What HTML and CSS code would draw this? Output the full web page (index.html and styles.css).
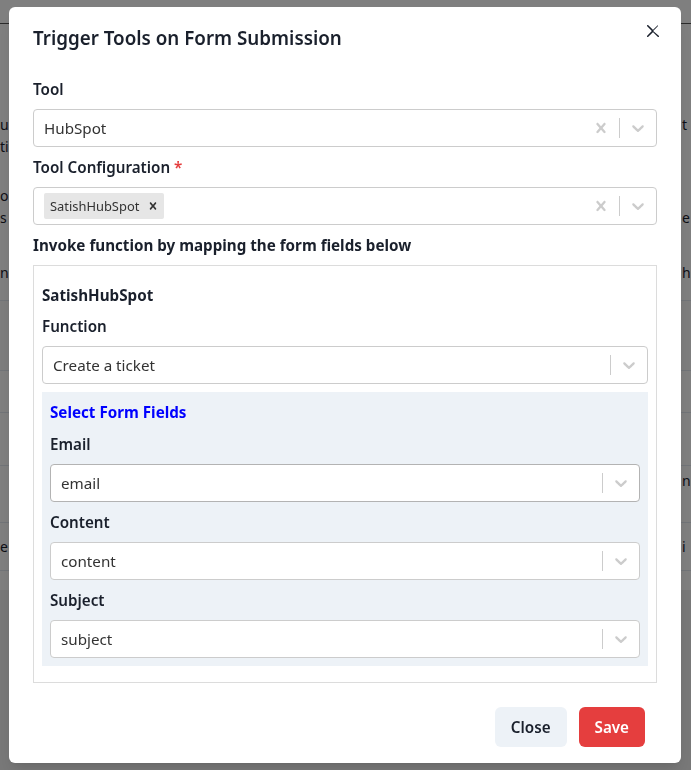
FILE: index.html
```html
<!DOCTYPE html>
<html lang="en">
<head>
<meta charset="utf-8">
<title>Trigger Tools on Form Submission</title>
<link rel="stylesheet" href="styles.css">
</head>
<body>
<div class="page">
  <div class="page-top"></div>
  <div class="page-intro">
    <div class="intro-line"><span>u</span><span></span><span>t</span></div>
    <div class="intro-line"><span>ti</span><span></span><span></span></div>
    <div class="intro-line gap-a"><span>o</span><span></span><span></span></div>
    <div class="intro-line"><span>s</span><span></span><span>e</span></div>
    <div class="intro-line gap-b"><span>n</span><span></span><span>h</span></div>
  </div>
  <div class="page-row r1"></div>
  <div class="page-row r2"></div>
  <div class="page-row r3"></div>
  <div class="page-row r4"><span></span><span></span><span>n</span></div>
  <div class="page-row r5"><span>e</span><span></span><span>i</span></div>
  <div class="page-row r6"></div>
</div>

<div class="overlay"></div>

<div class="modal-layer">
  <section class="modal">
    <header class="modal-header">
      <h2 class="modal-title">Trigger Tools on Form Submission</h2>
      <button class="modal-close" aria-label="Close">
        <svg viewBox="0 0 24 24" width="12" height="12"><path fill="currentColor" d="M.439,21.44a1.5,1.5,0,0,0,2.122,2.121L11.823,14.3a.25.25,0,0,1,.354,0l9.262,9.263a1.5,1.5,0,1,0,2.122-2.121L12.3,12.177a.25.25,0,0,1,0-.354l9.263-9.262A1.5,1.5,0,0,0,21.439.44L12.177,9.7a.25.25,0,0,1-.354,0L2.561.44A1.5,1.5,0,0,0,.439,2.561L9.7,11.823a.25.25,0,0,1,0,.354Z"/></svg>
      </button>
    </header>

    <div class="modal-body">
      <div class="field first">
        <label class="label">Tool</label>
        <div class="select">
          <div class="value"><span class="single">HubSpot</span></div>
          <div class="indicators">
            <span class="ind"><svg viewBox="0 0 20 20" width="20" height="20"><path fill="currentColor" d="M14.348 14.849c-0.469 0.469-1.229 0.469-1.697 0l-2.651-3.030-2.651 3.029c-0.469 0.469-1.229 0.469-1.697 0-0.469-0.469-0.469-1.229 0-1.697l2.758-3.150-2.759-3.152c-0.469-0.469-0.469-1.228 0-1.697s1.228-0.469 1.697 0l2.652 3.031 2.651-3.031c0.469-0.469 1.228-0.469 1.697 0s0.469 1.229 0 1.697l-2.758 3.152 2.758 3.150c0.469 0.469 0.469 1.229 0 1.698z"/></svg></span>
            <span class="sep"></span>
            <span class="ind"><svg viewBox="0 0 20 20" width="20" height="20"><path fill="currentColor" d="M4.516 7.548c0.436-0.446 1.043-0.481 1.576 0l3.908 3.747 3.908-3.747c0.533-0.481 1.141-0.446 1.574 0 0.436 0.445 0.408 1.197 0 1.615-0.406 0.418-4.695 4.502-4.695 4.502-0.217 0.223-0.502 0.335-0.787 0.335s-0.57-0.112-0.789-0.335c0 0-4.287-4.084-4.695-4.502s-0.436-1.170 0-1.615z"/></svg></span>
          </div>
        </div>
      </div>

      <div class="field">
        <label class="label">Tool Configuration <span class="req">*</span></label>
        <div class="select">
          <div class="value">
            <span class="chip">
              <span class="chip-label">SatishHubSpot</span>
              <span class="chip-remove"><svg viewBox="0 0 20 20" width="14" height="14"><path fill="currentColor" d="M14.348 14.849c-0.469 0.469-1.229 0.469-1.697 0l-2.651-3.030-2.651 3.029c-0.469 0.469-1.229 0.469-1.697 0-0.469-0.469-0.469-1.229 0-1.697l2.758-3.150-2.759-3.152c-0.469-0.469-0.469-1.228 0-1.697s1.228-0.469 1.697 0l2.652 3.031 2.651-3.031c0.469-0.469 1.228-0.469 1.697 0s0.469 1.229 0 1.697l-2.758 3.152 2.758 3.150c0.469 0.469 0.469 1.229 0 1.698z"/></svg></span>
            </span>
          </div>
          <div class="indicators">
            <span class="ind"><svg viewBox="0 0 20 20" width="20" height="20"><path fill="currentColor" d="M14.348 14.849c-0.469 0.469-1.229 0.469-1.697 0l-2.651-3.030-2.651 3.029c-0.469 0.469-1.229 0.469-1.697 0-0.469-0.469-0.469-1.229 0-1.697l2.758-3.150-2.759-3.152c-0.469-0.469-0.469-1.228 0-1.697s1.228-0.469 1.697 0l2.652 3.031 2.651-3.031c0.469-0.469 1.228-0.469 1.697 0s0.469 1.229 0 1.697l-2.758 3.152 2.758 3.150c0.469 0.469 0.469 1.229 0 1.698z"/></svg></span>
            <span class="sep"></span>
            <span class="ind"><svg viewBox="0 0 20 20" width="20" height="20"><path fill="currentColor" d="M4.516 7.548c0.436-0.446 1.043-0.481 1.576 0l3.908 3.747 3.908-3.747c0.533-0.481 1.141-0.446 1.574 0 0.436 0.445 0.408 1.197 0 1.615-0.406 0.418-4.695 4.502-4.695 4.502-0.217 0.223-0.502 0.335-0.787 0.335s-0.57-0.112-0.789-0.335c0 0-4.287-4.084-4.695-4.502s-0.436-1.170 0-1.615z"/></svg></span>
          </div>
        </div>
      </div>

      <div class="field">
        <p class="section-label">Invoke function by mapping the form fields below</p>
        <div class="mapping">
          <p class="tool-name">SatishHubSpot</p>
          <div class="field">
            <label class="label">Function</label>
            <div class="select">
              <div class="value"><span class="single">Create a ticket</span></div>
              <div class="indicators">
                <span class="sep"></span>
                <span class="ind"><svg viewBox="0 0 20 20" width="20" height="20"><path fill="currentColor" d="M4.516 7.548c0.436-0.446 1.043-0.481 1.576 0l3.908 3.747 3.908-3.747c0.533-0.481 1.141-0.446 1.574 0 0.436 0.445 0.408 1.197 0 1.615-0.406 0.418-4.695 4.502-4.695 4.502-0.217 0.223-0.502 0.335-0.787 0.335s-0.57-0.112-0.789-0.335c0 0-4.287-4.084-4.695-4.502s-0.436-1.170 0-1.615z"/></svg></span>
              </div>
            </div>
          </div>

          <div class="fields-panel">
            <p class="panel-title">Select Form Fields</p>
            <div class="field pf-first">
              <label class="label">Email</label>
              <div class="select hover">
                <div class="value"><span class="single">email</span></div>
                <div class="indicators">
                  <span class="sep"></span>
                  <span class="ind"><svg viewBox="0 0 20 20" width="20" height="20"><path fill="currentColor" d="M4.516 7.548c0.436-0.446 1.043-0.481 1.576 0l3.908 3.747 3.908-3.747c0.533-0.481 1.141-0.446 1.574 0 0.436 0.445 0.408 1.197 0 1.615-0.406 0.418-4.695 4.502-4.695 4.502-0.217 0.223-0.502 0.335-0.787 0.335s-0.57-0.112-0.789-0.335c0 0-4.287-4.084-4.695-4.502s-0.436-1.170 0-1.615z"/></svg></span>
                </div>
              </div>
            </div>
            <div class="field">
              <label class="label">Content</label>
              <div class="select">
                <div class="value"><span class="single">content</span></div>
                <div class="indicators">
                  <span class="sep"></span>
                  <span class="ind"><svg viewBox="0 0 20 20" width="20" height="20"><path fill="currentColor" d="M4.516 7.548c0.436-0.446 1.043-0.481 1.576 0l3.908 3.747 3.908-3.747c0.533-0.481 1.141-0.446 1.574 0 0.436 0.445 0.408 1.197 0 1.615-0.406 0.418-4.695 4.502-4.695 4.502-0.217 0.223-0.502 0.335-0.787 0.335s-0.57-0.112-0.789-0.335c0 0-4.287-4.084-4.695-4.502s-0.436-1.170 0-1.615z"/></svg></span>
                </div>
              </div>
            </div>
            <div class="field">
              <label class="label">Subject</label>
              <div class="select">
                <div class="value"><span class="single">subject</span></div>
                <div class="indicators">
                  <span class="sep"></span>
                  <span class="ind"><svg viewBox="0 0 20 20" width="20" height="20"><path fill="currentColor" d="M4.516 7.548c0.436-0.446 1.043-0.481 1.576 0l3.908 3.747 3.908-3.747c0.533-0.481 1.141-0.446 1.574 0 0.436 0.445 0.408 1.197 0 1.615-0.406 0.418-4.695 4.502-4.695 4.502-0.217 0.223-0.502 0.335-0.787 0.335s-0.57-0.112-0.789-0.335c0 0-4.287-4.084-4.695-4.502s-0.436-1.170 0-1.615z"/></svg></span>
                </div>
              </div>
            </div>
          </div>
        </div>
      </div>
    </div>

    <footer class="modal-footer">
      <button class="btn btn-gray">Close</button>
      <button class="btn btn-red">Save</button>
    </footer>
  </section>
</div>
</body>
</html>
```

FILE: styles.css
```css
* { box-sizing: border-box; }

html, body {
  margin: 0;
  padding: 0;
  height: 100%;
}

body {
  background: #f0f0f0;
  font-family: "Noto Sans", "Open Sans", sans-serif;
  color: #1a202c;
  overflow: hidden;
}

/* ---------- background page ---------- */
.page {
  background: #ffffff;
  font-size: 14px;
  color: #1a202c;
}

.page-top {
  height: 24px;
  border-bottom: 1px solid #555;
}

.page-intro {
  padding-top: 90px;
  padding-bottom: 16px;
}

.intro-line,
.page-row {
  display: grid;
  grid-template-columns: 9px 673px 9px;
  white-space: nowrap;
  overflow: hidden;
}

.intro-line {
  height: 22px;
  line-height: 22px;
}

.intro-line > span,
.page-row > span { overflow: hidden; }

.intro-line.gap-a { margin-top: 27px; }
.intro-line.gap-b { margin-top: 33px; }

.page-row {
  border-top: 1px solid #e2e8f0;
  align-items: center;
}
.page-row.r1 { height: 70px; background: #fafafa; }
.page-row.r2 { height: 42px; }
.page-row.r3 { height: 53px; }
.page-row.r4 { height: 57px; align-items: start; padding-top: 5px; }
.page-row.r5 { height: 48px; }
.page-row.r6 { height: 20px; }

/* ---------- overlay ---------- */
.overlay {
  position: fixed;
  inset: 0;
  background: rgba(0, 0, 0, 0.5);
}

.modal-layer {
  position: fixed;
  inset: 0;
  padding: 7px 10px 0 9px;
}

.modal {
  background: #fff;
  border-radius: 6px;
  position: relative;
  box-shadow: 0 10px 15px -3px rgba(0,0,0,0.1), 0 4px 6px -2px rgba(0,0,0,0.05);
}

.modal-header {
  padding: 16px 24px;
}

.modal-title {
  margin: 0;
  font-size: 18.8px;
  line-height: 30px;
  font-weight: 600;
  color: #1a202c;
}

.modal-close {
  position: absolute;
  top: 8px;
  right: 12px;
  width: 32px;
  height: 32px;
  border: 0;
  background: transparent;
  display: flex;
  align-items: center;
  justify-content: center;
  color: #1a202c;
  padding: 0;
  border-radius: 6px;
}

.modal-body {
  padding: 9px 24px 8px;
}

.field { margin-top: 9px; }
.field.first { margin-top: 0; }

.label {
  display: block;
  font-size: 15.2px;
  line-height: 22px;
  font-weight: 600;
  margin-bottom: 9px;
}

.req { color: #e53e3e; }

.section-label {
  margin: 0 0 9px;
  font-size: 15.2px;
  line-height: 22px;
  font-weight: 700;
}

/* ---------- react-select look ---------- */
.select {
  display: flex;
  align-items: center;
  min-height: 38px;
  background: #fff;
  border: 1px solid #cccccc;
  border-radius: 4px;
}
.select.hover { border-color: #b3b3b3; }

.value {
  flex: 1;
  display: flex;
  align-items: center;
  padding: 2px 8px;
  min-width: 0;
}

.single {
  margin: 0 2px;
  font-size: 15.2px;
  color: #333333;
  white-space: nowrap;
}

.chip {
  display: flex;
  background: #e6e6e6;
  border-radius: 2px;
  margin: 2px;
}

.chip-label {
  font-size: 12.9px;
  line-height: 20px;
  padding: 3px 3px 3px 6px;
  color: #333333;
}

.chip-remove {
  display: flex;
  align-items: center;
  padding: 0 4px;
  color: #333333;
}

.indicators {
  display: flex;
  align-items: center;
  align-self: stretch;
}

.ind {
  display: flex;
  padding: 8px;
  color: #cccccc;
}

.sep {
  align-self: stretch;
  width: 1px;
  background: #cccccc;
  margin: 8px 0;
}

/* ---------- mapping box ---------- */
.mapping {
  border: 1px solid #dcdcdc;
  padding: 18px 8px 16px;
}

.tool-name {
  margin: 0;
  font-size: 15.2px;
  line-height: 22px;
  font-weight: 700;
}

.fields-panel {
  margin-top: 8px;
  background: #edf2f7;
  padding: 9px 8px 8px;
}

.panel-title {
  margin: 0;
  font-size: 15.2px;
  line-height: 22px;
  font-weight: 700;
  color: #0000ff;
}

.fields-panel .field.pf-first { margin-top: 10px; }

/* ---------- footer ---------- */
.modal-footer {
  display: flex;
  justify-content: flex-end;
  gap: 12px;
  padding: 16px 36px 16px 24px;
}

.btn {
  height: 40px;
  padding: 0 16px;
  border: 0;
  border-radius: 6px;
  font-family: inherit;
  font-size: 15.2px;
  font-weight: 600;
}

.btn-gray { background: #edf2f7; color: #1a202c; }
.btn-red { background: #e53e3e; color: #ffffff; }
```
